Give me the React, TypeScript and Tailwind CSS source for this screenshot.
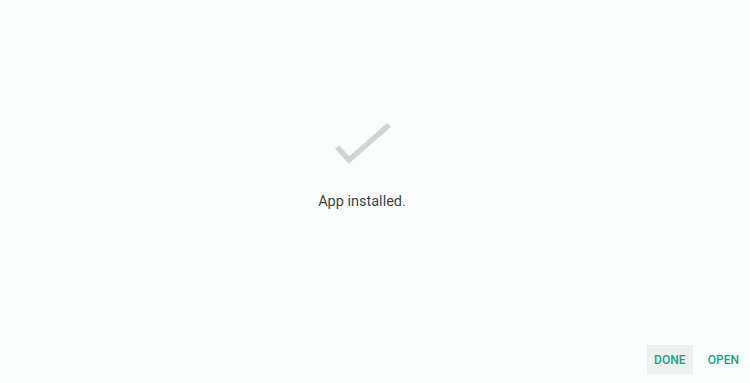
import React from 'react';

const Check: React.FC = () => (
  <svg width="60" height="48" viewBox="0 0 60 48" fill="none" aria-hidden="true" className="ml-[4px]">
    <path d="M3 26 L15 39 L55 4" stroke="#d0d4d3" strokeWidth="5.5" strokeLinecap="butt" strokeLinejoin="miter" />
  </svg>
);

export default function App() {
  return (
    <div className="w-[750px] h-[383px] bg-[#fcfefe] flex flex-col font-['Roboto',sans-serif]">
      <div className="flex-1 flex flex-col items-center pt-[121px] pr-[26px]">
        <Check />
        <p className="mt-[22px] text-[14.5px] text-[#404443]">App installed.</p>
      </div>
      <div className="flex justify-end items-center gap-[15px] pr-[11px] pb-[9px]">
        <button className="h-[29px] w-[46px] flex items-center justify-center bg-[#eef0ef] text-[#1e9e7a] text-[12px] font-medium">DONE</button>
        <button className="h-[29px] text-[#1e9e7a] text-[12px] font-medium">OPEN</button>
      </div>
    </div>
  );
}
